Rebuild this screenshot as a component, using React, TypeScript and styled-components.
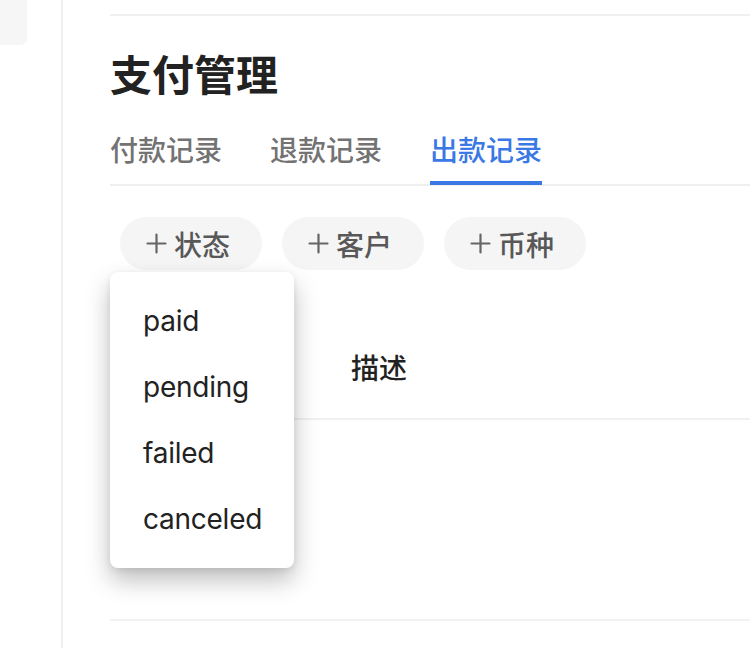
import React from "react";
import styled, { createGlobalStyle } from "styled-components";

const Global = createGlobalStyle`
  html, body { margin: 0; padding: 0; background: #ffffff; }
  body {
    font-family: Inter, "Noto Sans CJK SC", "Noto Sans", sans-serif;
    color: #222222;
    -webkit-font-smoothing: antialiased;
  }
`;

const Page = styled.div`
  display: flex;
  width: 750px;
  height: 648px;
  overflow: hidden;
`;

const Sidebar = styled.aside`
  width: 61px;
  flex: none;
  border-right: 2px solid #f0f0f0;
`;

const SideItem = styled.div`
  width: 27px;
  height: 45px;
  background: #f6f6f6;
  border-bottom-right-radius: 7px;
`;

const Main = styled.main`
  flex: 1;
  padding-left: 47px;
  display: flex;
  flex-direction: column;
`;

const TopRule = styled.div`
  margin-top: 14px;
  height: 2px;
  background: #f0f0f0;
`;

const Title = styled.h1`
  margin: 39px 0 0;
  font-size: 42px;
  line-height: 42px;
  font-weight: 700;
  color: #222222;
`;

const Tabs = styled.nav`
  margin-top: 40px;
  display: flex;
  gap: 48px;
  border-bottom: 2px solid #efefef;
`;

const Tab = styled.div<{ $active?: boolean }>`
  font-size: 28px;
  line-height: 28px;
  font-weight: 500;
  padding-bottom: 16px;
  margin-bottom: -1px;
  border-bottom: 4px solid ${(p) => (p.$active ? "#3a78e6" : "transparent")};
  color: ${(p) => (p.$active ? "#3a78e6" : "#737373")};
`;

const Filters = styled.div`
  margin-top: 31px;
  padding-left: 10px;
  display: flex;
  gap: 20px;
`;

const ChipWrap = styled.div`
  position: relative;
`;

const Chip = styled.button`
  height: 53px;
  padding: 0 32px 0 26px;
  border: none;
  border-radius: 27px;
  background: #f5f5f5;
  display: flex;
  align-items: center;
  gap: 7px;
  font-family: inherit;
  font-size: 28px;
  font-weight: 500;
  color: #585858;
  cursor: pointer;
`;

const PlusIcon = () => (
  <svg width="21" height="21" viewBox="0 0 21 21" fill="none">
    <path d="M10.5 1.5v18M1.5 10.5h18" stroke="#666666" strokeWidth="2.2" strokeLinecap="round" />
  </svg>
);

const Menu = styled.ul`
  position: absolute;
  top: 55px;
  left: -10px;
  z-index: 5;
  margin: 0;
  padding: 16px 0 16px;
  width: 184px;
  list-style: none;
  background: #ffffff;
  border-radius: 8px;
  box-shadow: 0 12px 24px rgba(0, 0, 0, 0.26), 0 2px 6px rgba(0, 0, 0, 0.08);
`;

const MenuItem = styled.li`
  padding-left: 33px;
  font-size: 28px;
  line-height: 66px;
  letter-spacing: -0.25px;
  color: #222222;
`;

const Table = styled.div`
  margin-top: 46px;
  display: flex;
  flex-direction: column;
`;

const HeaderRow = styled.div`
  display: grid;
  grid-template-columns: 208px 1fr;
  padding: 39px 0 35px 33px;
  border-bottom: 2px solid #f0f0f0;
`;

const HeadCell = styled.div`
  font-size: 28px;
  line-height: 28px;
  font-weight: 500;
  color: #222222;
`;

const Body = styled.div`
  height: 199px;
  border-bottom: 2px solid #f2f2f2;
`;

const statuses = ["paid", "pending", "failed", "canceled"];

export default function App() {
  return (
    <>
      <Global />
      <Page>
        <Sidebar>
          <SideItem />
        </Sidebar>
        <Main>
          <TopRule />
          <Title>支付管理</Title>
          <Tabs>
            <Tab>付款记录</Tab>
            <Tab>退款记录</Tab>
            <Tab $active>出款记录</Tab>
          </Tabs>
          <Filters>
            <ChipWrap>
              <Chip>
                <PlusIcon />
                状态
              </Chip>
              <Menu>
                {statuses.map((s) => (
                  <MenuItem key={s}>{s}</MenuItem>
                ))}
              </Menu>
            </ChipWrap>
            <ChipWrap>
              <Chip>
                <PlusIcon />
                客户
              </Chip>
            </ChipWrap>
            <ChipWrap>
              <Chip>
                <PlusIcon />
                币种
              </Chip>
            </ChipWrap>
          </Filters>
          <Table>
            <HeaderRow>
              <HeadCell />
              <HeadCell>描述</HeadCell>
            </HeaderRow>
            <Body />
          </Table>
        </Main>
      </Page>
    </>
  );
}
